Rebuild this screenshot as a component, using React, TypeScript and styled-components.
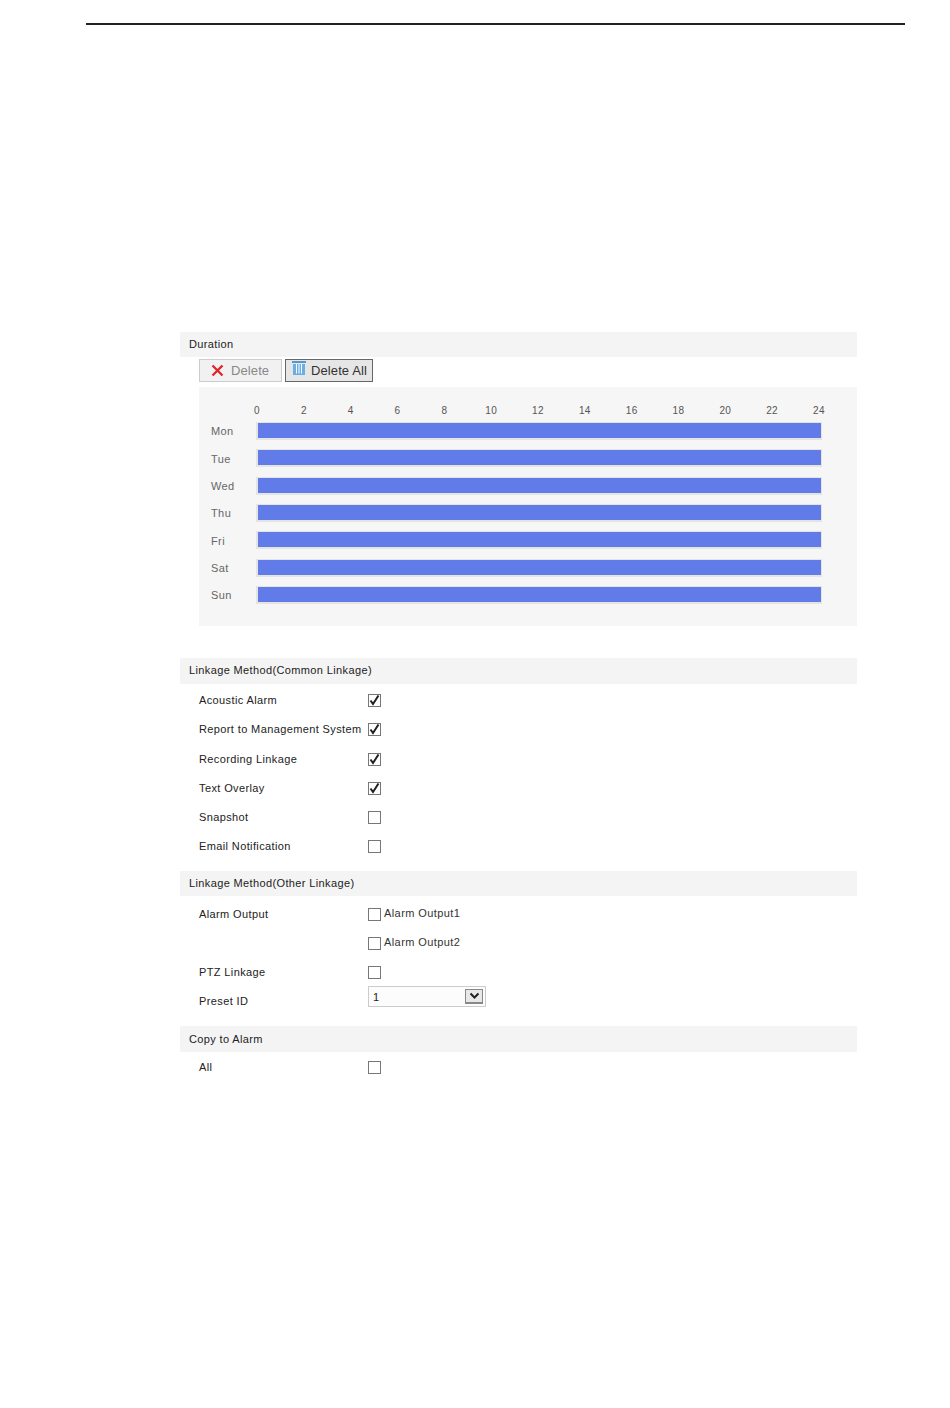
import React from "react";
import styled, { createGlobalStyle } from "styled-components";

const Global = createGlobalStyle`
  html, body { margin: 0; padding: 0; background: #fff; }
  body { font-family: "Liberation Sans", Arial, sans-serif; font-size: 11px; color: #222; }
`;

const Page = styled.div`
  width: 950px;
  height: 1408px;
  padding-top: 23px;
  box-sizing: border-box;
  overflow: hidden;
`;
const Rule = styled.div`
  margin-left: 86px;
  width: 819px;
  height: 2px;
  background: #222;
`;
const Panel = styled.div`
  margin: 307px 0 0 180px;
  width: 677px;
  display: flex;
  flex-direction: column;
`;
const SectionHeader = styled.div<{ $h?: number; $top?: number; $pad?: number }>`
  height: ${(p) => p.$h ?? 25}px;
  margin-top: ${(p) => p.$top ?? 0}px;
  box-sizing: border-box;
  background: #f4f4f4;
  padding: 0 0 ${(p) => p.$pad ?? 2}px 9px;
  display: flex;
  align-items: center;
  font-size: 11px;
  letter-spacing: 0.37px;
  color: #222;
`;
const Toolbar = styled.div`
  margin: 2px 0 0 19px;
  display: flex;
  gap: 3px;
  height: 23px;
`;
const ToolButton = styled.div<{ $active?: boolean; $w: number }>`
  box-sizing: border-box;
  width: ${(p) => p.$w}px;
  height: 23px;
  border: 1px solid ${(p) => (p.$active ? "#666" : "#ccc")};
  background: ${(p) => (p.$active ? "#e6e6e6" : "#f1f1f1")};
  color: ${(p) => (p.$active ? "#333" : "#888")};
  display: flex;
  align-items: center;
  font-size: 13px;
  letter-spacing: 0.1px;
  padding-left: ${(p) => (p.$active ? 6 : 11)}px;
  gap: ${(p) => (p.$active ? 5 : 7)}px;
`;
const Schedule = styled.div`
  margin: 5px 0 0 19px;
  width: 658px;
  height: 239px;
  box-sizing: border-box;
  background: #f6f6f6;
  padding: 18px 0 0 12px;
`;
const Axis = styled.div`
  margin-left: 46px;
  width: 562px;
  height: 12px;
  display: flex;
  justify-content: space-between;
`;
const Tick = styled.div`
  width: 0;
  display: flex;
  flex-direction: column;
  align-items: center;
  font-size: 10px;
  line-height: 12px;
  letter-spacing: 0.3px;
  color: #555;
  white-space: nowrap;
  &::after {
    content: "";
    width: 1px;
    height: 5px;
    background: #d8d8d8;
  }
`;
const Days = styled.div`
  margin-top: 5px;
`;
const DayRow = styled.div`
  height: 27.35px;
  display: flex;
  align-items: flex-start;
`;
const DayLabel = styled.div`
  width: 45px;
  font-size: 11px;
  line-height: 14px;
  letter-spacing: 0.4px;
  color: #666;
  padding-top: 2.4px;
`;
const Track = styled.div`
  box-sizing: border-box;
  width: 566px;
  height: 18px;
  background: #dcdcdc;
  border: solid #e4e4e4;
  border-width: 1px 1px 2px 2px;
  display: flex;
`;
const Fill = styled.div`
  flex: 1;
  background: #617be8;
`;
const FormList = styled.div<{ $top: number }>`
  margin: ${(p) => p.$top}px 0 0 19px;
  display: flex;
  flex-direction: column;
`;
const FormRow = styled.div`
  height: 29.25px;
  display: flex;
  align-items: center;
`;
const RowLabel = styled.div`
  width: 169px;
  flex: none;
  font-size: 11px;
  letter-spacing: 0.38px;
  color: #222;
  white-space: nowrap;
  padding-bottom: 1px;
`;
const Box = styled.span`
  box-sizing: border-box;
  width: 13px;
  height: 13px;
  flex: none;
  border: 1px solid #777;
  background: #fff;
  display: flex;
  align-items: center;
  justify-content: center;
`;
const OptionText = styled.span`
  margin-left: 3px;
  padding-bottom: 2px;
  letter-spacing: 0.42px;
  color: #333;
`;
const Select = styled.div`
  box-sizing: border-box;
  width: 118px;
  height: 21px;
  border: 1px solid #ccc;
  background: #fcfcfc;
  display: flex;
  align-items: center;
  justify-content: space-between;
  padding: 0 2px 0 4px;
  font-size: 11px;
  margin-bottom: 10px;
`;
const SelectArrow = styled.span`
  box-sizing: border-box;
  width: 18px;
  height: 15px;
  background: #e8e8e8;
  border: solid #888;
  border-width: 1px 1px 2px 1px;
  display: flex;
  align-items: center;
  justify-content: center;
`;
const TrashIcon = styled.svg`
  margin-top: -5px;
`;

const ticks = [0, 2, 4, 6, 8, 10, 12, 14, 16, 18, 20, 22, 24];
const days = ["Mon", "Tue", "Wed", "Thu", "Fri", "Sat", "Sun"];

const Check = ({ on }: { on?: boolean }) => (
  <Box>
    {on && (
      <svg width="11" height="11" viewBox="0 0 11 11">
        <path d="M1.5 5.5 L4 9 L9.5 0.5" fill="none" stroke="#222" strokeWidth="2" />
      </svg>
    )}
  </Box>
);

const common: [string, boolean][] = [
  ["Acoustic Alarm", true],
  ["Report to Management System", true],
  ["Recording Linkage", true],
  ["Text Overlay", true],
  ["Snapshot", false],
  ["Email Notification", false],
];

export default function App() {
  return (
    <Page>
      <Global />
      <Rule />
      <Panel>
        <SectionHeader>Duration</SectionHeader>
        <Toolbar>
          <ToolButton $w={83}>
            <svg width="13" height="13" viewBox="0 0 13 13">
              <path d="M1.5 1.5 L11.5 11.5 M11.5 1.5 L1.5 11.5" stroke="#e0242c" strokeWidth="2.3" fill="none" />
            </svg>
            Delete
          </ToolButton>
          <ToolButton $active $w={88}>
            <TrashIcon width="14" height="14" viewBox="0 0 14 14">
              <path d="M0 1 H14" stroke="#4f9ad6" strokeWidth="2" />
              <path d="M1 3 H13 V14 H1 Z" fill="#6caee2" />
              <path d="M4.5 3 V12.5 M7 3 V12.5 M9.5 3 V12.5" stroke="#fff" />
            </TrashIcon>
            Delete All
          </ToolButton>
        </Toolbar>
        <Schedule>
          <Axis>
            {ticks.map((t) => (
              <Tick key={t}>{t}</Tick>
            ))}
          </Axis>
          <Days>
            {days.map((d) => (
              <DayRow key={d}>
                <DayLabel>{d}</DayLabel>
                <Track>
                  <Fill />
                </Track>
              </DayRow>
            ))}
          </Days>
        </Schedule>
        <SectionHeader $top={32} $h={26}>Linkage Method(Common Linkage)</SectionHeader>
        <FormList $top={2}>
          {common.map(([label, on]) => (
            <FormRow key={label}>
              <RowLabel>{label}</RowLabel>
              <Check on={on} />
            </FormRow>
          ))}
        </FormList>
        <SectionHeader $top={9} $pad={0}>Linkage Method(Other Linkage)</SectionHeader>
        <FormList $top={4}>
          <FormRow>
            <RowLabel>Alarm Output</RowLabel>
            <Check />
            <OptionText>Alarm Output1</OptionText>
          </FormRow>
          <FormRow>
            <RowLabel />
            <Check />
            <OptionText>Alarm Output2</OptionText>
          </FormRow>
          <FormRow>
            <RowLabel>PTZ Linkage</RowLabel>
            <Check />
          </FormRow>
          <FormRow>
            <RowLabel>Preset ID</RowLabel>
            <Select>
              1
              <SelectArrow>
                <svg width="11" height="8" viewBox="0 0 11 8">
                  <path d="M1.5 1.5 L5.5 5.5 L9.5 1.5" fill="none" stroke="#222" strokeWidth="2" />
                </svg>
              </SelectArrow>
            </Select>
          </FormRow>
        </FormList>
        <SectionHeader $top={9} $h={26} $pad={0}>Copy to Alarm</SectionHeader>
        <FormList $top={1}>
          <FormRow>
            <RowLabel>All</RowLabel>
            <Check />
          </FormRow>
        </FormList>
      </Panel>
    </Page>
  );
}
